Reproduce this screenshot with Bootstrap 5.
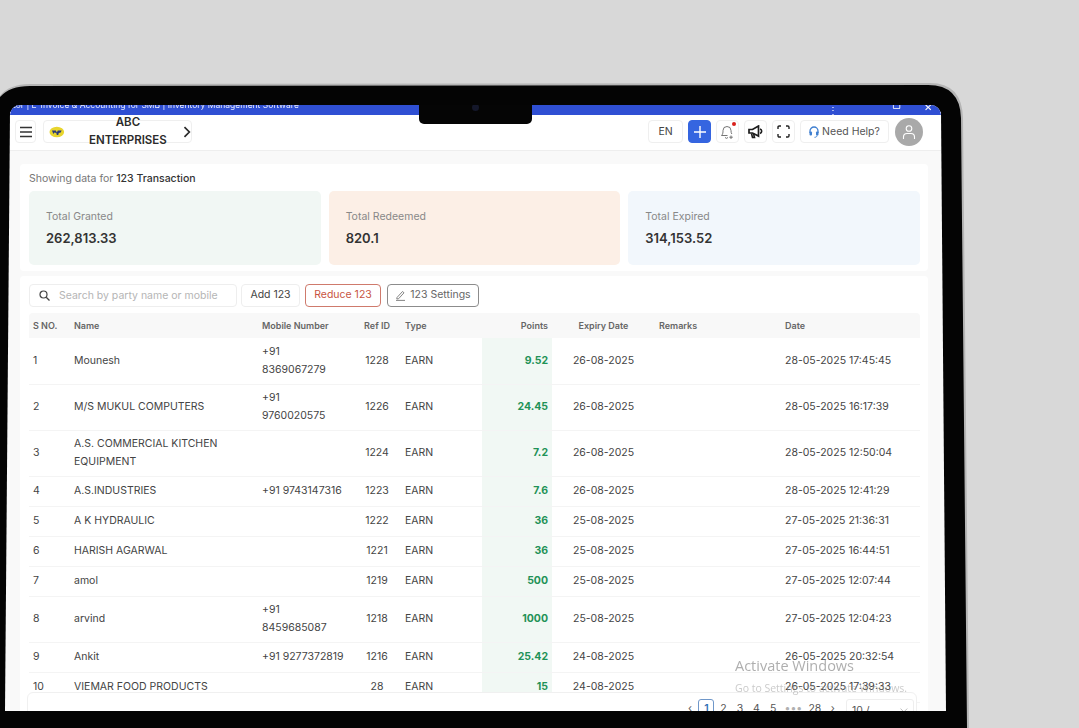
<!DOCTYPE html>
<html lang="en">
<head>
  <meta charset="UTF-8" />
  <title>123 Transactions</title>
  <link href="https://cdn.jsdelivr.net/npm/bootstrap@5.3.0/dist/css/bootstrap.min.css" rel="stylesheet" />
  <style>
    html, body { height: 728px; overflow: hidden; }
    body {
      margin: 0;
      padding: 105px 0 0 10px;
      background: #d8d8d8;
      font-family: Inter, "Liberation Sans", sans-serif;
      font-size: 11px;
      color: #444;
      position: relative;
    }
    .device-bg { position: absolute; left: 0; top: 0; }
    .screen {
      position: relative;
      width: 931px;
      height: 606px;
      overflow: hidden;
      background: #f9f9f9;
      border-radius: 10px 10px 0 0;
      filter: blur(.35px);
    }
    .title-bar {
      height: 10px;
      background: #2f4fd3;
      color: #e8ecff;
      font-size: 8.5px;
      line-height: 1px;
      padding-left: 3px;
      overflow: hidden;
      position: relative;
    }
    .win-ctl { position: absolute; top: 0; color: #fff; font-size: 10px; line-height: 1; }
    .notch {
      position: absolute;
      left: 409px; top: 0;
      width: 113px; height: 19px;
      background: #050505;
      border-radius: 0 0 5px 5px;
    }
    .cam {
      position: absolute;
      left: 53px; top: -1px;
      width: 7px; height: 7px;
      border-radius: 50%;
      background: #14172a;
    }
    .top-head {
      height: 36px;
      background: #fff;
      border-bottom: 1px solid #eeeeee;
      padding: 5px 18px 0 5px;
    }
    .tool-btn {
      height: 23px;
      border: 1px solid #efefef;
      border-radius: 4px;
      background: #fff;
      color: #444;
      font-size: 10.5px;
      padding: 0;
      display: flex;
      align-items: center;
      justify-content: center;
    }
    .w-menu { width: 21px; }
    .w-company { width: 149px; margin-left: 7px; justify-content: flex-start; padding-left: 5px; font-size: 11.5px; font-weight: 600; color: #2b2b2b; }
    .w-lang { width: 35px; }
    .w-plus { width: 23px; background: #3565e0; border-color: #3565e0; margin-left: 5px; }
    .w-icon { width: 23px; margin-left: 5px; }
    .w-help { width: 89px; margin-left: 5px; color: #555; gap: 3px; }
    .avatar-dot {
      width: 28px; height: 28px;
      margin: -2px 0 0 6px;
      border-radius: 50%;
      background: #a9a9a9;
      display: flex; align-items: center; justify-content: center;
    }
    .red-dot { position: absolute; right: 2px; top: 1px; width: 4px; height: 4px; border-radius: 50%; background: #d8201c; }
    .content-area { padding: 13px 13px 0 10px; }
    .panel { background: #fff; border: 0; border-radius: 4px; }
    .panel-stats { height: 107px; padding: 8px 8px 0 9px; margin-bottom: 5px; }
    .showing { height: 19px; line-height: 13px; color: #777; font-size: 10.5px; }
    .showing b { font-weight: 500; color: #333; }
    .stat-box { height: 74px; border-radius: 5px; padding: 19px 17px 0; }
    .stat-green { background: #f1f7f4; }
    .stat-peach { background: #fcefe6; }
    .stat-blue { background: #f2f7fc; }
    .stat-label { color: #888; font-size: 10.5px; line-height: 13px; }
    .stat-value { color: #333; font-size: 13px; font-weight: 600; line-height: 16px; margin-top: 7px; }
    .panel-table { height: 460px; padding: 8px 8px 0 9px; }
    .search-box {
      width: 208px; height: 23px;
      border: 1px solid #eeeeee;
      border-radius: 4px;
      padding-left: 9px;
      gap: 9px;
      color: #b5b5b5;
      font-size: 10.5px;
    }
    .act-btn {
      height: 23px;
      font-size: 10.5px;
      line-height: 1;
      padding: 0;
      border-radius: 4px;
      background: #fff;
      display: flex; align-items: center; justify-content: center; gap: 4px;
    }
    .act-add { width: 59px; border: 1px solid #eeeeee; color: #444; margin-left: 4px; }
    .act-reduce { width: 76px; border: 1px solid #cf7a6c; color: #c8543f; margin-left: 5px; }
    .act-settings { width: 92px; border: 1px solid #8c8c8c; color: #666; margin-left: 6px; }
    .data-table { table-layout: fixed; width: 891px; margin: 6px 0 0; font-size: 10.5px; color: #444; }
    .data-table > :not(caption) > * > * { padding: 0 4px; border-bottom: 1px solid #f4f4f4; box-shadow: none; vertical-align: middle; line-height: 18px; color: #444; }
    .data-table thead th { background: #f8f8f8; height: 25px; font-size: 9px; font-weight: 600; color: #666; border-bottom: 0; }
    .data-table thead th:first-child { border-radius: 4px 0 0 0; }
    .data-table thead th:last-child { border-radius: 0 4px 0 0; }
    .data-table tbody tr { height: 30px; }
    .data-table tbody tr.tall { height: 46px; }
    .data-table > tbody > tr > td.pts { background: #f1f8f4; color: #1f9257; font-weight: 700; text-align: right; }
    .pager-bar {
      position: absolute;
      left: 17px; top: 587px;
      width: 890px; height: 40px;
      background: #fff;
      border: 1px solid #f0f0f0;
      border-radius: 6px;
      padding: 6px 2px 0 0;
      color: #555;
      font-size: 10.5px;
    }
    .pg { width: 16.6px; height: 20px; text-align: center; line-height: 20px; }
    .pg-on { width: 16px; border: 1px solid #6f97c9; border-radius: 3px; color: #2f6fb5; font-weight: 600; line-height: 18px; margin-right: .6px; }
    .pg-more { width: 24px; color: #b0b0b0; letter-spacing: 0; }
    .pg-wide { width: 19px; }
    .pg-size { width: 68px; height: 22px; border: 1px solid #eeeeee; border-radius: 3px; margin-left: 5px; padding: 0 5px; line-height: 22px; gap: 4px; }
    .watermark { position: absolute; left: 735px; top: 659px; color: rgba(125,125,125,.62); font-family: "Open Sans", sans-serif; line-height: 1; }
    .wm-one { font-size: 14.5px; }
    .wm-two { font-size: 10.5px; margin-top: 9px; color: rgba(150,150,150,.5); }
  </style>
</head>
<body>
  <!-- laptop body drawn behind the page, it widens a bit towards the bottom -->
  <svg class="device-bg" width="1079" height="728" viewBox="0 0 1079 728">
    <path d="M-8 728 L-8 120 Q-6 84 30 84 L930 83 Q962 83 963 118 L969 728 Z" fill="#b5b5b5"/>
    <path d="M-8 728 L-8 120 Q-6 86 30 86 L928 85 Q960 85 961 118 L967 728 Z" fill="#040404"/>
    <polygon points="10,112 941,112 946,711 5,711" fill="#f9f9f9"/>
  </svg>

  <div class="screen">
    <div class="title-bar">
      tor | E-Invoice &amp; Accounting for SMB | Inventory Management Software
      <span class="win-ctl" style="left:818px">⋮</span>
      <span class="win-ctl" style="left:851px;top:-6px">–</span>
      <span class="win-ctl" style="left:882px;top:-5px">▢</span>
      <span class="win-ctl" style="left:914px;top:-3px">✕</span>
    </div>
    <div class="notch"><span class="cam"></span></div>

    <div class="top-head d-flex align-items-start">
      <button class="tool-btn w-menu" type="button">
        <svg width="14" height="12" viewBox="0 0 14 12"><path d="M1 1.5h12M1 6h12M1 10.5h12" stroke="#333" stroke-width="1.4" fill="none"/></svg>
      </button>
      <button class="tool-btn w-company" type="button">
        <svg width="16" height="12" viewBox="0 0 16 12"><ellipse cx="8" cy="6" rx="7.5" ry="5.5" fill="#e8d52e"/><path d="M3 4.5h4l1 2 1-2h4l-1 2-2 .5-.5 2H8l-.5-2-2-.5-1 1.5z" fill="#2a3a7a"/></svg>
        <span class="ms-2 ps-1">ABC ENTERPRISES</span>
        <svg class="ms-1" width="8" height="12" viewBox="0 0 8 12"><path d="M1.5 1l5 5-5 5" stroke="#2b2b2b" stroke-width="1.7" fill="none"/></svg>
      </button>
      <div class="ms-auto d-flex align-items-start">
        <button class="tool-btn w-lang" type="button">EN</button>
        <button class="tool-btn w-plus" type="button">
          <svg width="12" height="12" viewBox="0 0 12 12"><path d="M6 0v12M0 6h12" stroke="#fff" stroke-width="1.4"/></svg>
        </button>
        <button class="tool-btn w-icon position-relative" type="button">
          <svg width="15" height="16" viewBox="0 0 15 16"><path d="M1.5 11.5c1.500-1.500 1.500-3 1.500-5a4 4 0 0 1 8 0c0 1.500.2 2.500.8 3.500M1.500 11.500h6M5 13.500a2 2 0 0 0 3 0M11 11.500v3.500M9.300 13.200h3.500" stroke="#666" stroke-width=".9" fill="none"/></svg>
          <span class="red-dot"></span>
        </button>
        <button class="tool-btn w-icon" type="button">
          <svg width="16" height="14" viewBox="0 0 16 14"><path d="M1 4.500h3.500L10.500 1v10L4.500 8H1z" fill="none" stroke="#1d1d1d" stroke-width="1.700"/><path d="M3.500 8.500l1 4h2l-1-4M12 4c2 .5 2.500 3.500 0 4.500" fill="none" stroke="#1d1d1d" stroke-width="1.600"/></svg>
        </button>
        <button class="tool-btn w-icon" type="button">
          <svg width="13" height="13" viewBox="0 0 13 13"><path d="M1 4V2.200C1 1.500 1.500 1 2.200 1H4M9 1h1.800c.7 0 1.200.5 1.200 1.200V4M12 9v1.800c0 .7-.5 1.200-1.200 1.200H9M4 12H2.200C1.500 12 1 11.500 1 10.800V9" fill="none" stroke="#222" stroke-width="1.400"/></svg>
        </button>
        <button class="tool-btn w-help" type="button">
          <svg width="10" height="12" viewBox="0 0 10 12"><path d="M1 7V5a4 4 0 0 1 8 0v2" fill="none" stroke="#3f7fd0" stroke-width="1.300"/><rect x=".5" y="5.500" width="2.500" height="4" rx="1" fill="#3f7fd0"/><rect x="7" y="5.500" width="2.500" height="4" rx="1" fill="#3f7fd0"/><path d="M8 9.500c0 1.200-1 1.800-2.500 1.800" fill="none" stroke="#3f7fd0"/></svg>
          Need Help?
        </button>
        <div class="avatar-dot">
          <svg width="14" height="16" viewBox="0 0 14 16"><circle cx="7" cy="4.500" r="2.800" fill="none" stroke="#fff" stroke-width="1.100"/><path d="M1.500 15v-2c0-2 1.500-3.500 3.500-3.500h4c2 0 3.500 1.500 3.500 3.500v2" fill="none" stroke="#fff" stroke-width="1.100"/></svg>
        </div>
      </div>
    </div>

    <div class="content-area">
      <div class="panel panel-stats">
        <div class="showing">Showing data for <b>123 Transaction</b></div>
        <div class="row g-2">
          <div class="col-4"><div class="stat-box stat-green"><div class="stat-label">Total Granted</div><div class="stat-value">262,813.33</div></div></div>
          <div class="col-4"><div class="stat-box stat-peach"><div class="stat-label">Total Redeemed</div><div class="stat-value">820.1</div></div></div>
          <div class="col-4"><div class="stat-box stat-blue"><div class="stat-label">Total Expired</div><div class="stat-value">314,153.52</div></div></div>
        </div>
      </div>

      <div class="panel panel-table">
        <div class="d-flex">
          <div class="search-box d-flex align-items-center">
            <svg width="11" height="11" viewBox="0 0 11 11"><circle cx="4.500" cy="4.500" r="3.500" fill="none" stroke="#444" stroke-width="1.200"/><path d="M7.200 7.200L10.500 10.500" stroke="#444" stroke-width="1.300"/></svg>
            <span>Search by party name or mobile</span>
          </div>
          <button class="act-btn act-add" type="button">Add 123</button>
          <button class="act-btn act-reduce" type="button">Reduce 123</button>
          <button class="act-btn act-settings" type="button">
            <svg width="11" height="11" viewBox="0 0 11 11"><path d="M2 7.500L7.500 1.500l1.500 1.300L3.500 8.800 1.800 9zM1 10.400h9" fill="none" stroke="#666" stroke-width=".8"/></svg>
            123 Settings
          </button>
        </div>

        <table class="table data-table">
          <colgroup>
            <col style="width:41px"><col style="width:188px"><col style="width:95px"><col style="width:48px"><col style="width:81px"><col style="width:70px"><col style="width:103px"><col style="width:126px"><col style="width:139px">
          </colgroup>
          <thead>
            <tr><th>S NO.</th><th>Name</th><th>Mobile Number</th><th class="text-center">Ref ID</th><th class="tc-type">Type</th><th class="text-end">Points</th><th class="text-center">Expiry Date</th><th>Remarks</th><th>Date</th></tr>
          </thead>
          <tbody id="rows"></tbody>
        </table>
      </div>
    </div>

    <div class="pager-bar d-flex justify-content-end align-items-start">
      <span class="pg">‹</span>
      <span class="pg pg-on">1</span>
      <span class="pg">2</span><span class="pg">3</span><span class="pg">4</span><span class="pg">5</span>
      <span class="pg pg-more">•••</span>
      <span class="pg pg-wide">28</span>
      <span class="pg">›</span>
      <span class="pg-size d-flex align-items-start">10 / page
        <svg class="mt-2" width="8" height="5" viewBox="0 0 8 5"><path d="M.5.500L4 4 7.500.500" fill="none" stroke="#bbb"/></svg>
      </span>
    </div>
  </div>

  <div class="watermark">
    <div class="wm-one">Activate Windows</div>
    <div class="wm-two">Go to Settings to activate Windows.</div>
  </div>

  <script>
    // s no, name, mobile, ref, points, expiry, date
    const rows = [
      [1, 'Mounesh', '+91<br>8369067279', 1228, '9.52', '26-08-2025', '28-05-2025 17:45:45'],
      [2, 'M/S MUKUL COMPUTERS', '+91<br>9760020575', 1226, '24.45', '26-08-2025', '28-05-2025 16:17:39'],
      [3, 'A.S. COMMERCIAL KITCHEN<br>EQUIPMENT', '', 1224, '7.2', '26-08-2025', '28-05-2025 12:50:04'],
      [4, 'A.S.INDUSTRIES', '+91 9743147316', 1223, '7.6', '26-08-2025', '28-05-2025 12:41:29'],
      [5, 'A K HYDRAULIC', '', 1222, '36', '25-08-2025', '27-05-2025 21:36:31'],
      [6, 'HARISH AGARWAL', '', 1221, '36', '25-08-2025', '27-05-2025 16:44:51'],
      [7, 'amol', '', 1219, '500', '25-08-2025', '27-05-2025 12:07:44'],
      [8, 'arvind', '+91<br>8459685087', 1218, '1000', '25-08-2025', '27-05-2025 12:04:23'],
      [9, 'Ankit', '+91 9277372819', 1216, '25.42', '24-08-2025', '26-05-2025 20:32:54'],
      [10, 'VIEMAR FOOD PRODUCTS', '', 28, '15', '24-08-2025', '26-05-2025 17:39:33']
    ];

    document.getElementById('rows').innerHTML = rows.map((r) => {
      const tall = r[1].includes('<br>') || r[2].includes('<br>');
      return `<tr class="${tall ? 'tall' : ''}">
        <td>${r[0]}</td><td>${r[1]}</td><td>${r[2]}</td>
        <td class="text-center">${r[3]}</td><td>EARN</td>
        <td class="pts">${r[4]}</td><td class="text-center">${r[5]}</td>
        <td></td><td>${r[6]}</td></tr>`;
    }).join('');
  </script>
</body>
</html>
